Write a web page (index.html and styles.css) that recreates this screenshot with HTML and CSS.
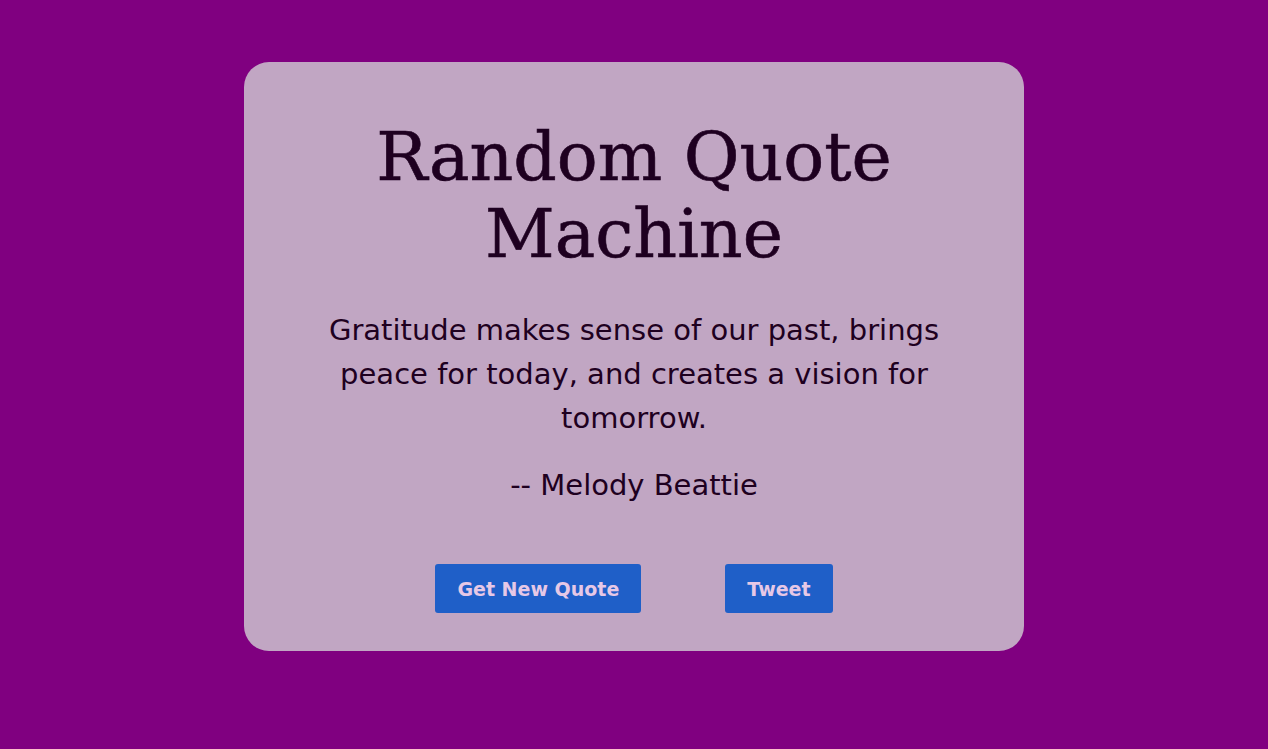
FILE: index.html
```html
<!DOCTYPE html>
<html>
<head>
<meta charset="utf-8">
<link rel="stylesheet" href="styles.css">
</head>
<body>
<main class="page">
  <section class="card">
    <h1 class="title">Random Quote Machine</h1>
    <p class="quote">Gratitude makes sense of our past, brings peace for today, and creates a vision for tomorrow.</p>
    <p class="author">-- Melody Beattie</p>
    <div class="actions">
      <button class="btn">Get New Quote</button>
      <button class="btn">Tweet</button>
    </div>
  </section>
</main>
</body>
</html>
```
FILE: styles.css
```css
html, body {
  margin: 0;
  padding: 0;
  background: #800080;
  height: 100%;
}
.page {
  display: flex;
  justify-content: center;
  padding-top: 62px;
}
.card {
  width: 780px;
  height: 589px;
  box-sizing: border-box;
  background: #c1a6c3;
  border-radius: 25px;
  padding: 56px 70px 0;
  display: flex;
  flex-direction: column;
  align-items: center;
  color: #1e0020;
  text-align: center;
}
.title {
  font-family: "DejaVu Serif", "Liberation Serif", serif;
  font-weight: normal;
  font-size: 68px;
  line-height: 77px;
  margin: 0;
  -webkit-text-stroke: 0.6px #1e0020;
}
.quote {
  font-family: "DejaVu Sans", sans-serif;
  font-size: 29px;
  line-height: 44px;
  margin: 36px 0 0;
}
.author {
  font-family: "DejaVu Sans", sans-serif;
  font-size: 29px;
  line-height: 44px;
  margin: 23px 0 0;
}
.actions {
  display: flex;
  gap: 84px;
  margin-top: 57px;
}
.btn {
  font-family: "DejaVu Sans", sans-serif;
  font-weight: bold;
  font-size: 19px;
  color: #e6c8e6;
  background: #1f5fc8;
  border: none;
  border-radius: 3px;
  height: 49px;
  padding: 0 22px;
}
```
